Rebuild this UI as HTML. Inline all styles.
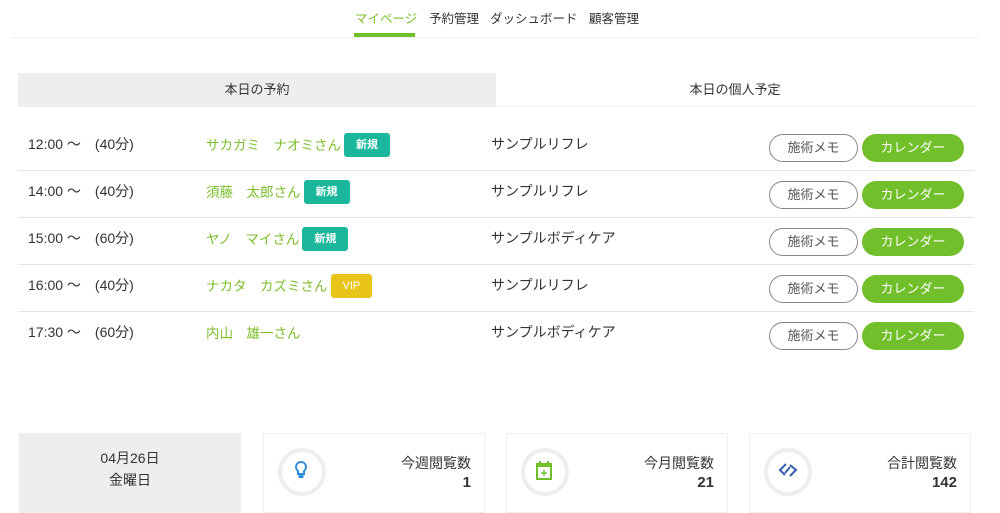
<!DOCTYPE html><html><head><meta charset="utf-8"><style>
*{margin:0;padding:0;box-sizing:border-box}
body{width:1000px;height:500px;overflow:hidden;background:#fff;font-family:"Liberation Sans","Noto Sans CJK JP",sans-serif;color:#333;position:relative}
.a{position:absolute}
.nav{font-size:12.5px;top:8px;white-space:nowrap}
.row{position:absolute;left:18px;width:956px;height:47px;border-bottom:1px solid #e5e5e5;font-size:14px}
.row span{position:absolute;top:10px;white-space:nowrap}
.g{color:#7bbf2b}
.nm{font-size:13.5px}
.badge{display:inline-block;vertical-align:middle;margin-left:3px;height:24px;line-height:24px;border-radius:3px;color:#fff;font-size:11px;font-weight:bold;padding:0 12px;margin-top:-3px}
.memo{position:absolute;left:751px;top:10px;width:89px;height:28px;border:1px solid #888;border-radius:14px;text-align:center;line-height:26px;font-size:13px;color:#555}
.cal{position:absolute;left:844px;top:10px;width:102px;height:28px;background:#72bf2c;border-radius:14px;text-align:center;line-height:28px;font-size:13px;color:#fff}
.card{position:absolute;top:433px;width:222px;height:80px;border:1px solid #eee}
.circ{position:absolute;left:14px;top:14px;width:48px;height:48px;border:4px solid #eee;border-radius:50%}
.lbl{position:absolute;right:13px;top:19px;font-size:14px}
.num{position:absolute;right:13px;top:40px;font-size:15px;font-weight:bold}
</style></head><body>
<div class="a nav g" style="left:355px">マイページ</div>
<div class="a nav" style="left:429px">予約管理</div>
<div class="a nav" style="left:490px">ダッシュボード</div>
<div class="a nav" style="left:589px">顧客管理</div>
<div class="a" style="left:354px;top:33px;width:61px;height:4px;background:#72bf2c"></div>
<div class="a" style="left:12px;top:37px;width:966px;height:1px;background:#eee"></div>
<div class="a" style="left:18px;top:73px;width:478px;height:34px;background:#eee;text-align:center;line-height:34px;font-size:13px">本日の予約</div>
<div class="a" style="left:496px;top:73px;width:478px;height:34px;text-align:center;line-height:34px;font-size:13px;border-bottom:1px solid #eee">本日の個人予定</div>

<div class="row" style="top:124px"><span style="left:10px">12:00 〜　(40分)</span><span class="g nm" style="left:188px">サカガミ　ナオミさん<b class="badge" style="background:#1bb79c">新規</b></span><span style="left:473px">サンプルリフレ</span><div class="memo">施術メモ</div><div class="cal">カレンダー</div></div>
<div class="row" style="top:171px"><span style="left:10px">14:00 〜　(40分)</span><span class="g nm" style="left:188px">須藤　太郎さん<b class="badge" style="background:#1bb79c">新規</b></span><span style="left:473px">サンプルリフレ</span><div class="memo">施術メモ</div><div class="cal">カレンダー</div></div>
<div class="row" style="top:218px"><span style="left:10px">15:00 〜　(60分)</span><span class="g nm" style="left:188px">ヤノ　マイさん<b class="badge" style="background:#1bb79c">新規</b></span><span style="left:473px">サンプルボディケア</span><div class="memo">施術メモ</div><div class="cal">カレンダー</div></div>
<div class="row" style="top:265px"><span style="left:10px">16:00 〜　(40分)</span><span class="g nm" style="left:188px">ナカタ　カズミさん<b class="badge" style="background:#e9c51a;font-weight:normal">VIP</b></span><span style="left:473px">サンプルリフレ</span><div class="memo">施術メモ</div><div class="cal">カレンダー</div></div>
<div class="row" style="top:312px;border-bottom:none"><span style="left:10px">17:30 〜　(60分)</span><span class="g nm" style="left:188px">内山　雄一さん</span><span style="left:473px">サンプルボディケア</span><div class="memo">施術メモ</div><div class="cal">カレンダー</div></div>

<div class="a" style="left:19px;top:433px;width:222px;height:80px;background:#eee;text-align:center;font-size:14px;line-height:22px;padding-top:14px">04月26日<br>金曜日</div>
<div class="card" style="left:263px"><div class="circ"></div>
<svg class="a" style="left:30px;top:27px" width="14" height="20" viewBox="0 0 14 20"><path d="M7 1a5 5 0 0 0-3 9v3h6v-3a5 5 0 0 0-3-9z" fill="none" stroke="#2d8fe0" stroke-width="2"/><rect x="4.5" y="13" width="5" height="4" fill="#2d8fe0"/></svg>
<div class="lbl">今週閲覧数</div><div class="num">1</div></div>
<div class="card" style="left:506px"><div class="circ"></div>
<svg class="a" style="left:28px;top:26px" width="18" height="20" viewBox="0 0 18 20"><rect x="2" y="4" width="14" height="15" fill="none" stroke="#72bf2c" stroke-width="2"/><rect x="2" y="4" width="14" height="3" fill="#72bf2c"/><rect x="4" y="1" width="2" height="4" fill="#72bf2c"/><rect x="12" y="1" width="2" height="4" fill="#72bf2c"/><path d="M9 10v6M6 13h6" stroke="#72bf2c" stroke-width="1.5"/></svg>
<div class="lbl">今月閲覧数</div><div class="num">21</div></div>
<div class="card" style="left:749px"><div class="circ"></div>
<svg class="a" style="left:28px;top:28px" width="20" height="16" viewBox="0 0 20 16"><path d="M8 2L2 8l5 5M12 3l6 5-6 6M12 5l-5 6" fill="none" stroke="#3a5fb0" stroke-width="2"/></svg>
<div class="lbl">合計閲覧数</div><div class="num">142</div></div>
</body></html>
